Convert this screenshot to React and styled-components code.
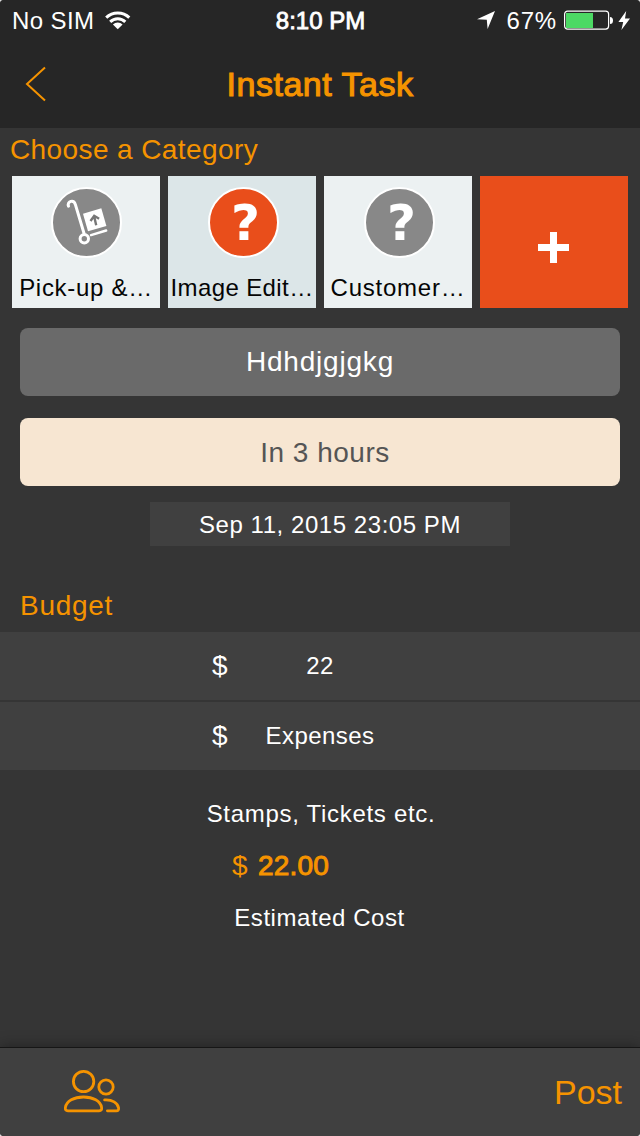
import React from "react";
import styled, { createGlobalStyle } from "styled-components";

const ORANGE = "#f59300";
const RED = "#e94e1b";

const GlobalStyle = createGlobalStyle`
  * { box-sizing: border-box; }
  body { margin: 0; background: #dcdcdc; }
`;

const Screen = styled.div`
  width: 640px;
  height: 1136px;
  display: flex;
  flex-direction: column;
  overflow: hidden;
  border-radius: 4px;
  background: #353535;
  color: #fff;
  font-family: "Liberation Sans", Arial, sans-serif;
`;

const Label = styled.span`
  display: block;
  white-space: nowrap;
  font-size: ${(p) => p.$size || 24}px;
  line-height: 32px;
  letter-spacing: ${(p) => p.$spacing ?? 0.45}px;
  color: ${(p) => p.$color || "inherit"};
  -webkit-text-stroke: ${(p) => p.$weight || 0}px currentColor;
`;

const StatusBar = styled.header`
  height: 40px;
  display: grid;
  grid-template-columns: 1fr auto 1fr;
  align-items: center;
  padding: 2px 9px 0 12px;
  background: #262626;
`;

const StatusGroup = styled.div`
  display: flex;
  align-items: center;
  justify-content: ${(p) => (p.$end ? "flex-end" : "flex-start")};
`;

const Time = styled(Label)`
  margin-right: 2px;
`;

const StatusIcon = styled.svg`
  display: block;
  margin-left: ${(p) => p.$gap || 0}px;
  margin-bottom: 2px;
`;

const BatteryLevel = styled(Label)`
  margin-left: 12px;
`;

const NavBar = styled.nav`
  height: 88px;
  display: grid;
  grid-template-columns: 80px 1fr 80px;
  align-items: center;
  justify-items: center;
  background: #262626;
`;

const BackButton = styled.button`
  justify-self: start;
  padding: 0 0 0 24px;
  border: 0;
  background: none;
  svg { display: block; }
`;

const Content = styled.main`
  flex: 1;
  min-height: 0;
`;

const CategoryHeading = styled.div`
  height: 48px;
  padding: 6px 10px;
`;

const Categories = styled.div`
  display: flex;
  gap: 8px;
  padding: 0 12px;
`;

const Tile = styled.div`
  width: 148px;
  height: 132px;
  display: flex;
  flex-direction: column;
  align-items: center;
  padding-top: 10px;
  overflow: hidden;
  color: #050505;
  background: ${(p) => (p.$selected ? "#dce6e8" : "#ecf1f2")};
`;

const TileBadge = styled.div`
  height: 72px;
  display: flex;
  align-items: center;
  flex: none;
  margin-bottom: 14px;
  padding-left: ${(p) => p.$shift || 0}px;
`;

const Circle = styled.div`
  width: 71px;
  height: 71px;
  flex: none;
  display: flex;
  align-items: center;
  justify-content: center;
  border-radius: 50%;
  border: 2px solid #fff;
  color: #fff;
  font: 700 50px/66px "DejaVu Sans", sans-serif;
  background: ${(p) => (p.$selected ? RED : "#888")};
  svg { display: block; flex: none; }
`;

const Question = styled.span`
  display: block;
  padding: 2px 0 0 4px;
`;

const AddTile = styled(Tile)`
  background: ${RED};
  padding: 56px 1px 0 0;
`;

const Fields = styled.div`
  display: flex;
  flex-direction: column;
  gap: 22px;
  padding: 20px 20px 0;
`;

const Field = styled.div`
  height: 68px;
  display: flex;
  align-items: center;
  justify-content: center;
  border-radius: 8px;
  color: ${(p) => (p.$light ? "#555" : "#fff")};
  background: ${(p) => (p.$light ? "#f7e6d2" : "#6a6a6a")};
  padding: ${(p) => (p.$light ? "2px 0 0 10px" : "0")};
`;

const DateBox = styled.div`
  width: 360px;
  height: 44px;
  margin: 16px auto 0 150px;
  padding-top: 2px;
  display: flex;
  align-items: center;
  justify-content: center;
  background: #404040;
`;

const BudgetHeading = styled.div`
  height: 86px;
  padding: 44px 20px 0;
`;

const BudgetRows = styled.div`
  display: flex;
  flex-direction: column;
  gap: 2px;
`;

const BudgetRow = styled.div`
  height: 68px;
  display: grid;
  grid-template-columns: 20px 200px;
  align-items: center;
  justify-items: center;
  padding-left: 210px;
  background: #404040;
`;

const Value = styled(Label)`
  margin-right: 20px;
`;

const Summary = styled.div`
  display: flex;
  flex-direction: column;
  align-items: center;
  gap: 20px;
  padding: 28px 0 0 2px;
`;

const Total = styled.div`
  display: flex;
  gap: 10px;
  margin-right: 81px;
`;

const Caption = styled(Label)`
  margin-right: 3px;
`;

const Footer = styled.footer`
  height: 89px;
  display: flex;
  align-items: center;
  justify-content: space-between;
  padding: 0 18px 0 60px;
  border-top: 1px solid #161616;
  background: #404040;
  box-shadow: 0 0 14px rgba(0, 0, 0, 0.4);
  svg { display: block; }
`;

function Wifi() {
  return (
    <StatusIcon $gap={11} width="26" height="19" viewBox="0 0 26 19">
      <g fill="none" stroke="#fff" strokeWidth="3">
        <path d="M1.2 6.7a16.6 16.6 0 0 1 23.1 0" />
        <path d="M5.2 10.9a10.8 10.8 0 0 1 15.1 0" />
      </g>
      <path d="M7.9 13.4a7 7 0 0 1 9.7 0L12.75 18.3z" fill="#fff" />
    </StatusIcon>
  );
}

function Battery() {
  return (
    <StatusIcon $gap={7} width="50" height="20" viewBox="0 0 50 20">
      <rect x=".6" y="1.1" width="44" height="18" rx="3" fill="none" stroke="#fff" strokeWidth="1.2" />
      <rect x="2" y="3" width="27" height="15" fill="#4cd964" />
      <path d="M46 7a3 3.5 0 0 1 0 7z" fill="#fff" />
    </StatusIcon>
  );
}

function Trolley() {
  return (
    <svg width="72" height="72" viewBox="0 0 72 72">
      <g fill="none" stroke="#fff" strokeWidth="3" strokeLinecap="round">
        <path d="M18.5 20.2c-.8-2.2.2-4.2 2.2-4.8 2.2-.6 3.9.6 4.7 3.2L34 47.2" />
        <circle cx="34.3" cy="52.7" r="4.2" />
        <path d="M41 49.1l15.2-4.6" strokeWidth="2.4" />
      </g>
      <path d="M33 27.7l18.3-5.5L56.4 40 38 45.3z" fill="#fff" />
      <path d="M46.2 39.3l-2-8.8M40.5 35l3.7-5.2 4.9 3" fill="none" stroke="#777" strokeWidth="2.4" />
    </svg>
  );
}

function People() {
  return (
    <svg width="64" height="50" viewBox="0 0 64 50" fill="none" stroke={ORANGE} strokeWidth="2.8" strokeLinecap="round">
      <circle cx="23.6" cy="14.5" r="10.2" />
      <circle cx="46" cy="20" r="7.2" />
      <path d="M8 43.8h31c2.2 0 3-1.3 2.6-3.4C40.5 33.9 33 30 23.5 30S6.5 33.9 5.4 40.4C5 42.5 5.8 43.8 8 43.8z" />
      <path d="M44.6 32.9c7.6-.5 13.2 3 14 8.1.2 1.9-.5 2.8-2.2 2.8h-9" />
    </svg>
  );
}

function Category({ name, selected, spacing, shift, children }) {
  return (
    <Tile $selected={selected}>
      <TileBadge $shift={shift}>
        <Circle $selected={selected}>{children || <Question>?</Question>}</Circle>
      </TileBadge>
      <Label $spacing={spacing}>{name}</Label>
    </Tile>
  );
}

export default function App() {
  return (
    <>
      <GlobalStyle />
      <Screen>
        <StatusBar>
          <StatusGroup>
            <Label $spacing={0.4}>No SIM</Label>
            <Wifi />
          </StatusGroup>
          <Time $weight={0.8} $spacing={0}>8:10 PM</Time>
          <StatusGroup $end>
            <StatusIcon width="18" height="18" viewBox="0 0 18 18">
              <path d="M0 8.3L18 0 10.6 18 9.8 8.8z" fill="#fff" />
            </StatusIcon>
            <BatteryLevel $spacing={0.8}>67%</BatteryLevel>
            <Battery />
            <StatusIcon $gap={4} width="13" height="19" viewBox="0 0 13 19">
              <path d="M8.2 0L.4 11h4.8L3.4 19 12 7.6H7z" fill="#fff" />
            </StatusIcon>
          </StatusGroup>
        </StatusBar>
        <NavBar>
          <BackButton aria-label="Back">
            <svg width="24" height="36" viewBox="0 0 24 36">
              <path d="M21 1.5L3 18l18 16.5" fill="none" stroke={ORANGE} strokeWidth="2" />
            </svg>
          </BackButton>
          <Label $size={34} $weight={1.1} $spacing={0.5} $color={ORANGE}>Instant Task</Label>
        </NavBar>
        <Content>
          <CategoryHeading>
            <Label $size={28} $spacing={0.4} $color={ORANGE}>Choose a Category</Label>
          </CategoryHeading>
          <Categories>
            <Category name="Pick-up &amp;…" spacing={0.7}><Trolley /></Category>
            <Category name="Image Edit…" selected spacing={0.4} shift={3} />
            <Category name="Customer…" spacing={0.75} shift={3} />
            <AddTile>
              <svg width="31" height="31" viewBox="0 0 31 31">
                <path d="M12 0h7v12h12v7H19v12h-7V19H0v-7h12z" fill="#fff" />
              </svg>
            </AddTile>
          </Categories>
          <Fields>
            <Field><Label $size={28} $spacing={0.8}>Hdhdjgjgkg</Label></Field>
            <Field $light><Label $size={28} $spacing={0.5}>In 3 hours</Label></Field>
          </Fields>
          <DateBox><Label $spacing={0.55}>Sep 11, 2015 23:05 PM</Label></DateBox>
          <BudgetHeading>
            <Label $size={28} $spacing={0.7} $color={ORANGE}>Budget</Label>
          </BudgetHeading>
          <BudgetRows>
            <BudgetRow><Label $size={28}>$</Label><Value>22</Value></BudgetRow>
            <BudgetRow><Label $size={28}>$</Label><Value>Expenses</Value></BudgetRow>
          </BudgetRows>
          <Summary>
            <Label $spacing={0.7}>Stamps, Tickets etc.</Label>
            <Total>
              <Label $size={28} $color={ORANGE}>$</Label>
              <Label $size={28} $spacing={0.2} $color={ORANGE} $weight={1}>22.00</Label>
            </Total>
            <Caption $spacing={0.55}>Estimated Cost</Caption>
          </Summary>
        </Content>
        <Footer>
          <People />
          <Label $size={34} $spacing={0} $color={ORANGE}>Post</Label>
        </Footer>
      </Screen>
    </>
  );
}
